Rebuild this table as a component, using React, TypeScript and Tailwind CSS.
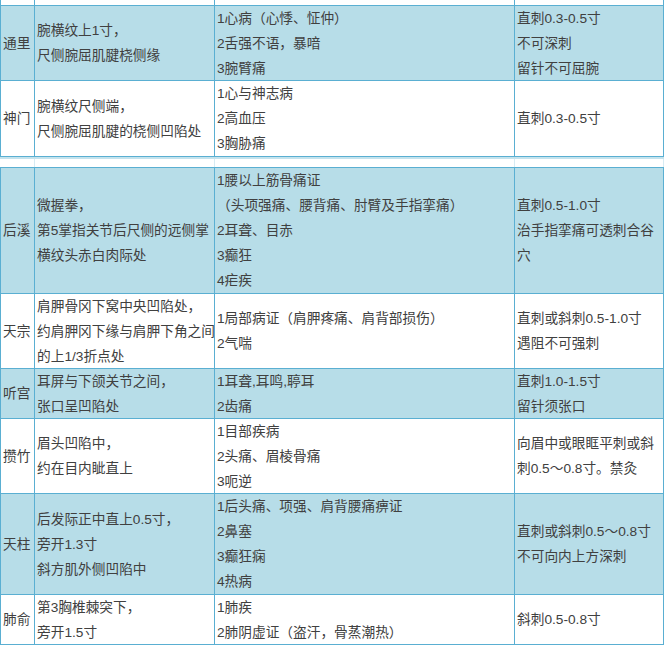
import React from "react";

type Row = {
  name: string;
  loc: string[];
  main: string[];
  method: string[];
  blue: boolean;
  h: string;
};

const topRows: Row[] = [
  {
    name: "通里",
    loc: ["腕横纹上1寸，", "尺侧腕屈肌腱桡侧缘"],
    main: ["1心病（心悸、怔仲）", "2舌强不语，暴喑", "3腕臂痛"],
    method: ["直刺0.3-0.5寸", "不可深刺", "留针不可屈腕"],
    blue: true,
    h: "h-[75px]",
  },
  {
    name: "神门",
    loc: ["腕横纹尺侧端，", "尺侧腕屈肌腱的桡侧凹陷处"],
    main: ["1心与神志病", "2高血压", "3胸胁痛"],
    method: ["直刺0.3-0.5寸"],
    blue: false,
    h: "h-[76px]",
  },
];

const bottomRows: Row[] = [
  {
    name: "后溪",
    loc: ["微握拳，", "第5掌指关节后尺侧的远侧掌", "横纹头赤白肉际处"],
    main: [
      "1腰以上筋骨痛证",
      "（头项强痛、腰背痛、肘臂及手指挛痛）",
      "2耳聋、目赤",
      "3癫狂",
      "4疟疾",
    ],
    method: ["直刺0.5-1.0寸", "治手指挛痛可透刺合谷", "穴"],
    blue: true,
    h: "h-[126px]",
  },
  {
    name: "天宗",
    loc: ["肩胛骨冈下窝中央凹陷处，", "约肩胛冈下缘与肩胛下角之间", "的上1/3折点处"],
    main: ["1局部病证（肩胛疼痛、肩背部损伤）", "2气喘"],
    method: ["直刺或斜刺0.5-1.0寸", "遇阻不可强刺"],
    blue: false,
    h: "h-[75px]",
  },
  {
    name: "听宫",
    loc: ["耳屏与下颌关节之间，", "张口呈凹陷处"],
    main: ["1耳聋,耳鸣,聤耳", "2齿痛"],
    method: ["直刺1.0-1.5寸", "留针须张口"],
    blue: true,
    h: "h-[50px]",
  },
  {
    name: "攒竹",
    loc: ["眉头凹陷中，", "约在目内眦直上"],
    main: ["1目部疾病", "2头痛、眉棱骨痛", "3呃逆"],
    method: ["向眉中或眼眶平刺或斜", "刺0.5～0.8寸。禁灸"],
    blue: false,
    h: "h-[75px]",
  },
  {
    name: "天柱",
    loc: ["后发际正中直上0.5寸，", "旁开1.3寸", "斜方肌外侧凹陷中"],
    main: ["1后头痛、项强、肩背腰痛痹证", "2鼻塞", "3癫狂痫", "4热病"],
    method: ["直刺或斜刺0.5～0.8寸", "不可向内上方深刺"],
    blue: true,
    h: "h-[101px]",
  },
  {
    name: "肺俞",
    loc: ["第3胸椎棘突下，", "旁开1.5寸"],
    main: ["1肺疾", "2肺阴虚证（盗汗，骨蒸潮热）"],
    method: ["斜刺0.5-0.8寸"],
    blue: false,
    h: "h-[50px]",
  },
];

const cell =
  "flex flex-col justify-center border-r border-b border-[#5aafd2] pl-[2px] leading-[25px] whitespace-nowrap overflow-hidden";

const Lines = ({ items }: { items: string[] }) => (
  <>
    {items.map((t, i) => (
      <div key={i}>{t}</div>
    ))}
  </>
);

const TableRow = ({ row }: { row: Row }) => (
  <div
    className={`grid grid-cols-[34px_180px_300px_149px] ${row.h} ${
      row.blue ? "bg-[#b7dde8]" : "bg-white"
    }`}
  >
    <div className={`${cell} pl-[1px]`}>{row.name}</div>
    <div className={cell}>
      <Lines items={row.loc} />
    </div>
    <div className={cell}>
      <Lines items={row.main} />
    </div>
    <div className={cell}>
      <Lines items={row.method} />
    </div>
  </div>
);

export default function App() {
  return (
    <div className="w-[667px] h-[646px] overflow-hidden bg-white text-[13.7px] text-[#404040] font-['Liberation_Sans','Noto_Sans_CJK_SC',sans-serif]">
      {/* first table, cut off at the top */}
      <div className="border-l border-[#5aafd2] w-[664px]">
        <div className="grid grid-cols-[34px_180px_300px_149px] h-[6px]">
          <div className="border-r border-b border-[#5aafd2]" />
          <div className="border-r border-b border-[#5aafd2]" />
          <div className="border-r border-b border-[#5aafd2]" />
          <div className="border-r border-b border-[#5aafd2]" />
        </div>
        {topRows.map((r) => (
          <TableRow key={r.name} row={r} />
        ))}
      </div>

      {/* gap between the two tables */}
      <div className="h-[2px] w-[664px] bg-[#c4e3ed]" />
      <div className="grid grid-cols-[35px_180px_300px_149px] h-[8px] w-[664px]">
        <div className="border-r border-[#d6ebf3]" />
        <div className="border-r border-[#d6ebf3]" />
        <div className="border-r border-[#d6ebf3]" />
        <div className="border-r border-[#d6ebf3]" />
      </div>

      {/* second table */}
      <div className="border-l border-t border-[#5aafd2] w-[664px]">
        {bottomRows.map((r) => (
          <TableRow key={r.name} row={r} />
        ))}
      </div>
    </div>
  );
}
